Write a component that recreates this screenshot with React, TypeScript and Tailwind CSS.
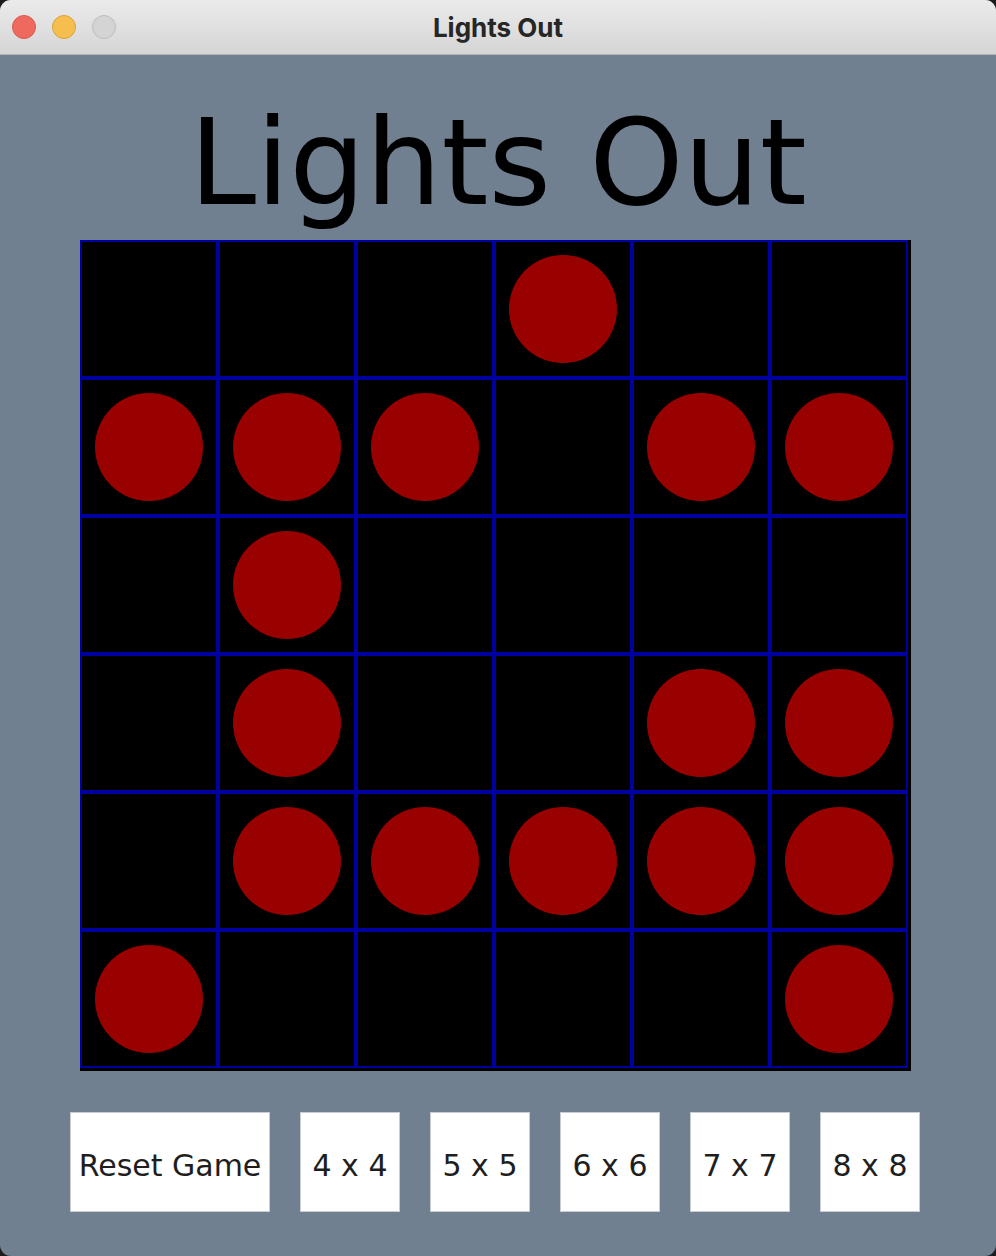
import React from "react";

const board = [
  [0, 0, 0, 1, 0, 0],
  [1, 1, 1, 0, 1, 1],
  [0, 1, 0, 0, 0, 0],
  [0, 1, 0, 0, 1, 1],
  [0, 1, 1, 1, 1, 1],
  [1, 0, 0, 0, 0, 1],
];

const buttons = ["4 x 4", "5 x 5", "6 x 6", "7 x 7", "8 x 8"];

export default function App() {
  return (
    <div className="w-[996px] h-[1256px] bg-[#1c1c1c]">
      <div className="w-[996px] h-[1256px] rounded-[11px] overflow-hidden flex flex-col bg-[#708090]">
        <div className="h-[55px] shrink-0 bg-gradient-to-b from-[#ebebeb] to-[#d5d5d5] border-b border-[#b4b4b4] flex items-center relative">
          <div className="flex items-center gap-4 pl-3">
            <div className="w-6 h-6 rounded-full bg-[#ee6a5f] border border-[#d8574c]" />
            <div className="w-6 h-6 rounded-full bg-[#f5be4f] border border-[#d9a23b]" />
            <div className="w-6 h-6 rounded-full bg-[#d4d4d4] border border-[#bdbdbd]" />
          </div>
          <div className="absolute inset-0 flex items-center justify-center text-[26px] font-bold text-[#262626] font-['Inter','Liberation_Sans',sans-serif]">
            Lights Out
          </div>
        </div>
        <div className="flex-1 flex flex-col">
          <div className="mt-[38px] h-[140px] flex justify-center text-[120px] leading-[140px] text-black font-['DejaVu_Sans',sans-serif]">
            Lights Out
          </div>
          <div className="mt-[7px] ml-[80px] w-[831px] h-[831px] bg-black">
            <div className="grid grid-cols-[repeat(6,138px)] grid-rows-[repeat(6,138px)]">
              {board.flatMap((row, r) =>
                row.map((v, c) => (
                  <div
                    key={`${r}-${c}`}
                    className="border-2 border-[#0000a0] flex items-center justify-center"
                  >
                    {v ? <div className="w-[108px] h-[108px] rounded-full bg-[#990000]" /> : null}
                  </div>
                ))
              )}
            </div>
          </div>
          <div className="mt-[41px] pl-[70px] flex gap-[30px] font-['DejaVu_Sans',sans-serif] text-[30px] text-[#1e1e1e]">
            <div className="w-[200px] h-[100px] pt-[6px] bg-white border border-[#c8cdd3] flex items-center justify-center">
              Reset Game
            </div>
            {buttons.map((b) => (
              <div
                key={b}
                className="w-[100px] h-[100px] pt-[6px] bg-white border border-[#c8cdd3] flex items-center justify-center"
              >
                {b}
              </div>
            ))}
          </div>
        </div>
      </div>
    </div>
  );
}
